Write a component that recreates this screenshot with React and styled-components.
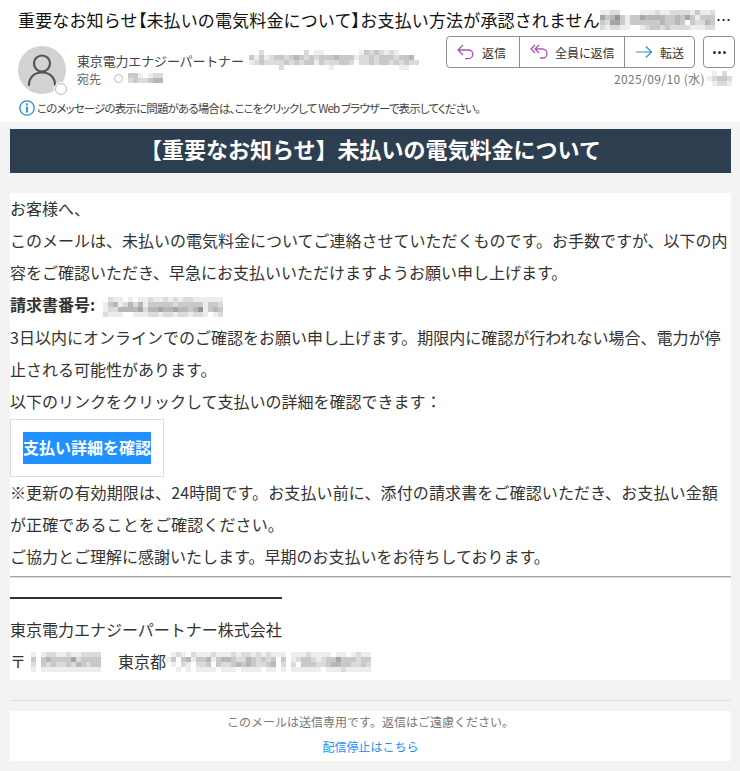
import React from "react";
import styled, { createGlobalStyle } from "styled-components";

const Global = createGlobalStyle`
  html, body { margin: 0; padding: 0; background: #f3f3f3; }
  body { font-family: "Noto Sans CJK JP", "Noto Sans", sans-serif; }
`;

const Page = styled.div`width: 740px; min-height: 771px; background: #f3f3f3;`;
const Header = styled.header`background: #fff; height: 122px; box-sizing: border-box; padding-top: 8px;`;
const Subject = styled.div`
  display: flex; align-items: center; height: 24px; padding-left: 18px; color: #111;
  font-size: 17px; line-height: 24px; white-space: nowrap;
`;
const SubjectText = styled.span`display: block; width: 582px; letter-spacing: 0.15px;`;
const Bracket = styled.span`font-feature-settings: "palt" 1;`;
const Ellipsis = styled.span`font-size: 15px; margin-left: 1px;`;
const MetaRow = styled.div`display: flex; justify-content: space-between; padding: 4px 3px 0 18px; height: 60px;`;
const SenderBlock = styled.div`display: flex;`;
const Avatar = styled.div`
  position: relative; width: 48px; height: 48px; margin-top: 10px; border-radius: 50%; background: #d2d2d2;
  display: flex; align-items: center; justify-content: center;
`;
const Presence = styled.span`
  position: absolute; right: -1px; bottom: -1px; width: 10px; height: 10px; border-radius: 50%;
  background: #fff; border: 1.5px solid #a9bccb; box-shadow: 0 0 0 1px #fff;
`;
const SenderInfo = styled.div`margin: 15px 0 0 11px;`;
const SenderLine = styled.div`display: flex; align-items: center; height: 18px; font-size: 13px; color: #444; white-space: nowrap;`;
const SenderName = styled.span`width: 172px; flex: none; letter-spacing: -0.16px;`;
const ToLine = styled.div`display: flex; align-items: center; height: 18px; font-size: 12px; color: #666;`;
const ToDot = styled.span`
  width: 7px; height: 7px; border-radius: 50%; border: 1px solid #a9bfd0; margin: 0 5px 0 13px; flex: none;
`;
const Actions = styled.div`display: flex; flex-direction: column; align-items: flex-end;`;
const ToolRow = styled.div`display: flex; gap: 8px; margin-right: 2px;`;
const ButtonGroup = styled.div`display: flex; height: 32px; box-sizing: border-box; border: 1px solid #8f8f8f; border-radius: 4px;`;
const ToolButton = styled.div`
  display: flex; align-items: center; width: ${p => p.$w}px; box-sizing: border-box; padding-left: 10px; gap: 7px;
  font-size: 12px; color: #333; white-space: nowrap; font-feature-settings: "palt" 1;
  & + & { border-left: 1px solid #8f8f8f; }
`;
const MoreButton = styled.div`
  width: 32px; height: 32px; box-sizing: border-box; border: 1px solid #8f8f8f; border-radius: 4px;
  display: flex; align-items: center; justify-content: center; gap: 2px;
`;
const Dot = styled.i`width: 3px; height: 3px; border-radius: 50%; background: #333;`;
const DateLine = styled.div`display: flex; align-items: center; height: 18px; margin-top: 1px; font-size: 12px; color: #777; gap: 2px;`;
const DateText = styled.span`letter-spacing: 0.4px;`;
const InfoBar = styled.div`
  display: flex; align-items: center; gap: 2px; height: 18px; margin-top: 3px; padding-left: 19px;
  font-size: 11.5px; color: #444; white-space: nowrap; letter-spacing: -0.85px; font-feature-settings: "palt" 1;
`;

const Main = styled.main`padding: 7px 9px 10px 10px;`;
const Banner = styled.h1`
  margin: 0; height: 44px; background: #2c3e50; color: #fff; text-align: center;
  font-size: 22px; line-height: 39px; font-weight: 700;
`;
const Card = styled.section`
  display: flow-root; background: #fff; margin-top: 20px; padding-bottom: 2px; color: #333; font-size: 16px; line-height: 32.3px;
`;
const Para = styled.p`margin: -1.5px 0 0; padding-bottom: 1.5px; letter-spacing: ${p => p.$ls || 0}px;`;
const Strong = styled.strong`font-weight: 700;`;
const InlineMosaic = styled.span`display: inline-block; vertical-align: middle; margin-left: ${p => p.$ml || 0}px; line-height: 0;`;
const ButtonBox = styled.div`
  width: 154px; height: 58px; box-sizing: border-box; border: 1px solid #ddd; padding: 12px;
`;
const PayButton = styled.a`
  display: block; width: 128px; height: 32px; background: #1e90ff; color: #fff; font-weight: 700;
  font-size: 16px; line-height: 30px; white-space: nowrap;
`;
const DoubleRule = styled.hr`
  margin: 2px 0 0; height: 0; border: 0; border-top: 1px solid #a5a5a5; border-bottom: 1px solid #ddd;
`;
const Signature = styled.div`margin-top: 19px; border-top: 2px solid #333; width: 272px; padding: 15px 0 2px; line-height: 30px; white-space: nowrap;`;
const Address = styled.div`display: flex; align-items: center; white-space: nowrap; height: 32px;`;
const Postal = styled.span`line-height: 30px; padding-bottom: 2px;`;
const City = styled(Postal)`margin-left: 17px;`;
const FootRule = styled.hr`margin: 20px 0 0; height: 1px; background: #ddd; border: 0;`;
const Footer = styled.footer`
  margin-top: 10px; height: 50px; background: #fff; text-align: center; font-size: 12px; color: #777;
`;
const FootNote = styled.div`line-height: 21px;`;
const FootLink = styled.a`display: block; color: #1e90ff; line-height: 29px;`;

function Mosaic({ rows, cell = 5, tint = 0 }) {
  const cols = Math.max(...rows.map(r => r.length));
  return (
    <svg width={cols * cell} height={rows.length * cell} shapeRendering="crispEdges" style={{ display: "block", flex: "none" }}>
      {rows.flatMap((r, y) =>
        [...r].map((c, x) => {
          const d = Number(c);
          if (!d) return null;
          const g = 255 - d * 18;
          const t = tint * (((x * 7 + y * 3) % 5) - 2);
          return <rect key={`${x}-${y}`} x={x * cell} y={y * cell} width={cell} height={cell} fill={`rgb(${g + t},${g},${g - t})`} />;
        })
      )}
    </svg>
  );
}

const Reply = () => (
  <svg width="18" height="16" viewBox="0 0 18 16" fill="none" stroke="#a855b5" strokeWidth="1.3">
    <path d="M6 1 1 6l5 5M1 6h10.5a4.3 4.3 0 0 1 0 8.6H8" />
  </svg>
);
const ReplyAll = () => (
  <svg width="18" height="16" viewBox="0 0 18 16" fill="none" stroke="#a855b5" strokeWidth="1.3">
    <path d="M5 1 1 5l4 4M9 1 5 5l4 4M5 5h7.5a4.3 4.3 0 0 1 0 9H10" />
  </svg>
);
const Forward = () => (
  <svg width="18" height="14" viewBox="0 0 18 14" fill="none" stroke="#2f8fc9" strokeWidth="1.2">
    <path d="M1 7h15.5M11 1.5 16.5 7 11 12.5" />
  </svg>
);
const Person = () => (
  <svg width="30" height="34" viewBox="0 0 30 34" fill="none" stroke="#555" strokeWidth="2.2">
    <circle cx="15" cy="10.5" r="8" />
    <path d="M2 32c0-7.500 5-12.500 13-12.500S28 24.500 28 32" strokeLinecap="round" />
  </svg>
);
const Info = () => (
  <svg width="16" height="16" viewBox="0 0 16 16" style={{ flex: "none" }}>
    <circle cx="8" cy="8" r="7.2" fill="none" stroke="#1b8ad3" strokeWidth="1.3" />
    <rect x="7.100" y="3.400" width="1.800" height="1.800" fill="#1b8ad3" />
    <rect x="7.100" y="6.500" width="1.800" height="6" fill="#1b8ad3" />
  </svg>
);

const M = {
  subject: [
    "11220000111211222213112",
    "53463133544443343531333",
    "32553133333343343032243",
    "21221100123323222211122",
  ],
  sender: [
    "0020000000020110000000132321210000",
    "3131233234323233343331223233323340",
    "1232222323233132223320223233232322",
    "0000002000000000100000000000001100",
  ],
  to: ["3310122", "2322344"],
  date: ["010200", "123320", "012210"],
  invoice: [
    "021101011211212122111111",
    "134124241333332333331332",
    "122444452445445443461343",
    "211100111221221221221012",
  ],
  zip: [
    "010122112112222",
    "030343333523333",
    "020323223243233",
    "010111111111111",
  ],
  addr: [
    "01210211121112122121211101112111101101211",
    "13034133413443224323230301233212335333233",
    "01021022303223434322340202033322344332232",
    "00101011110111011110110101111110111211111",
  ],
};

export default function App() {
  return (
    <Page>
      <Global />
      <Header>
        <Subject>
          <SubjectText>重要なお知らせ<Bracket>【</Bracket>未払いの電気料金について<Bracket>】</Bracket>お支払い方法が承認されません</SubjectText>
          <Mosaic rows={M.subject} tint={2} />
          <Ellipsis>…</Ellipsis>
        </Subject>
        <MetaRow>
          <SenderBlock>
            <Avatar>
              <Person />
              <Presence />
            </Avatar>
            <SenderInfo>
              <SenderLine>
                <SenderName>東京電力エナジーパートナー</SenderName>
                <Mosaic rows={M.sender} tint={2} />
              </SenderLine>
              <ToLine>
                宛先
                <ToDot />
                <Mosaic rows={M.to} />
              </ToLine>
            </SenderInfo>
          </SenderBlock>
          <Actions>
            <ToolRow>
              <ButtonGroup>
                <ToolButton $w={72}><Reply />返信</ToolButton>
                <ToolButton $w={105}><ReplyAll />全員に返信</ToolButton>
                <ToolButton $w={70}><Forward />転送</ToolButton>
              </ButtonGroup>
              <MoreButton><Dot /><Dot /><Dot /></MoreButton>
            </ToolRow>
            <DateLine>
              <DateText>2025/09/10 (水)</DateText>
              <Mosaic rows={M.date} />
            </DateLine>
          </Actions>
        </MetaRow>
        <InfoBar>
          <Info />
          このメッセージの表示に問題がある場合は、ここをクリックして Web ブラウザーで表示してください。
        </InfoBar>
      </Header>
      <Main>
        <Banner>【重要なお知らせ】未払いの電気料金について</Banner>
        <Card>
          <Para>お客様へ、</Para>
          <Para>このメールは、未払いの電気料金についてご連絡させていただくものです。お手数ですが、以下の内容をご確認いただき、早急にお支払いいただけますようお願い申し上げます。</Para>
          <Para>
            <Strong>請求書番号:</Strong>
            <InlineMosaic $ml={8}><Mosaic rows={M.invoice} /></InlineMosaic>
          </Para>
          <Para>3日以内にオンラインでのご確認をお願い申し上げます。期限内に確認が行われない場合、電力が停止される可能性があります。</Para>
          <Para>以下のリンクをクリックして支払いの詳細を確認できます：</Para>
          <ButtonBox><PayButton>支払い詳細を確認</PayButton></ButtonBox>
          <Para $ls={0.12}>※更新の有効期限は、24時間です。お支払い前に、添付の請求書をご確認いただき、お支払い金額が正確であることをご確認ください。</Para>
          <Para>ご協力とご理解に感謝いたします。早期のお支払いをお待ちしております。</Para>
          <DoubleRule />
          <Signature>東京電力エナジーパートナー株式会社</Signature>
          <Address>
            <Postal>〒</Postal>
            <Mosaic rows={M.zip} />
            <City>東京都</City>
            <Mosaic rows={M.addr} />
          </Address>
        </Card>
        <FootRule />
        <Footer>
          <FootNote>このメールは送信専用です。返信はご遠慮ください。</FootNote>
          <FootLink>配信停止はこちら</FootLink>
        </Footer>
      </Main>
    </Page>
  );
}
